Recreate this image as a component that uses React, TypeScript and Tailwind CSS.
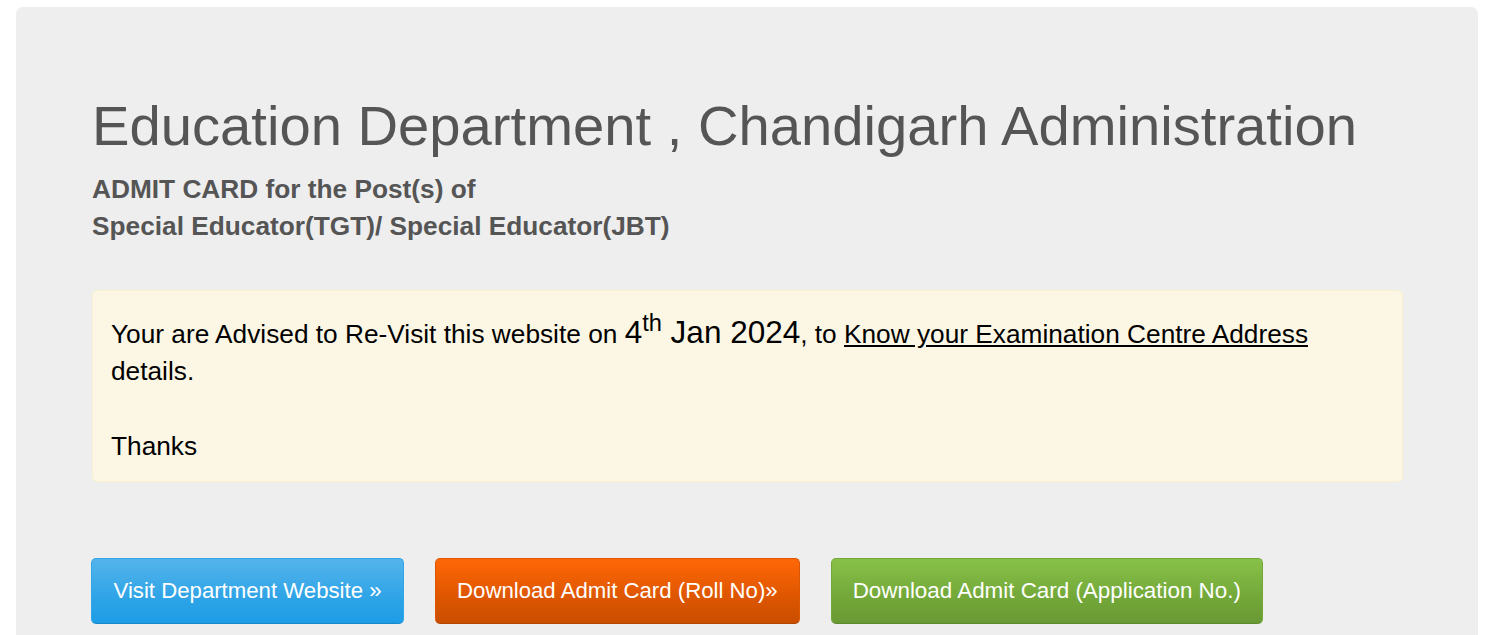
import React from "react";

export default function App() {
  return (
    <div className="min-h-screen bg-white pt-[7px] pl-[16px] pr-[14px] font-['Liberation_Sans',Arial,sans-serif]">
      <div className="rounded-[7px] bg-[#eeeeee] pl-[76px] pr-[75px] pt-[88px] pb-[60px]">
        <h1 className="text-[56.2px] leading-[62px] font-normal text-[#555555]">
          Education Department , Chandigarh Administration
        </h1>
        <p className="mt-[13.5px] text-[26.25px] leading-[37.5px] font-bold text-[#555555]">
          ADMIT CARD for the Post(s) of
          <br />
          Special Educator(TGT)/ Special Educator(JBT)
        </p>

        <div className="mt-[44px] rounded-[5px] border border-[#faefcf] bg-[#fcf7e4] pl-[18px] pr-[19px] pt-[23px] pb-[15px]">
          <p className="text-[26.25px] leading-[37.5px] text-black">
            Your are Advised to Re-Visit this website on{" "}
            <span className="text-[31.5px]">
              4<sup>th</sup> Jan 2024
            </span>
            , to <u className="underline">Know your Examination Centre Address</u> details.
            <br />
            <br />
            Thanks
          </p>
        </div>

        <div className="mt-[76px] -ml-px flex gap-[30.5px]">
          <a
            href="#"
            className="rounded-[5px] border border-[#2fa4e7] border-b-[#178acc] bg-[linear-gradient(#54b4eb,#2fa4e7_60%,#1d9ce5)] px-[21.5px] py-[17px] text-[22.2px] leading-[30px] text-white"
          >
            Visit Department Website »
          </a>
          <a
            href="#"
            className="rounded-[5px] border border-[#dd5600] border-b-[#b14500] bg-[linear-gradient(#ff6707,#dd5600_60%,#c94e00)] px-[21.5px] py-[17px] text-[22.2px] leading-[30px] text-white"
          >
            Download Admit Card (Roll No)»
          </a>
          <a
            href="#"
            className="rounded-[5px] border border-[#73a839] border-b-[#5e8a2e] bg-[linear-gradient(#88c149,#73a839_60%,#699934)] px-[21px] py-[17px] text-[22.4px] leading-[30px] text-white"
          >
            Download Admit Card (Application No.)
          </a>
        </div>
      </div>
    </div>
  );
}
